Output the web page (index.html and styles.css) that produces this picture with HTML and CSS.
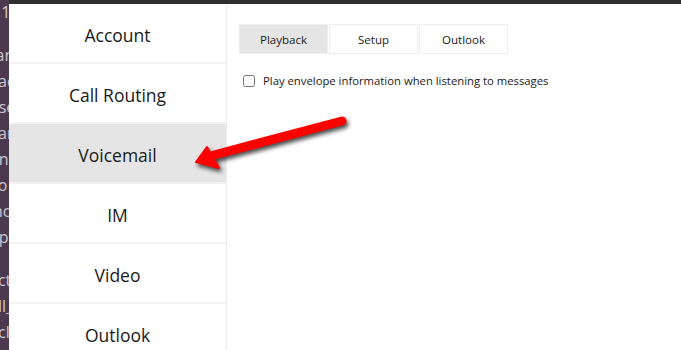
FILE: index.html
```html
<!DOCTYPE html>
<html lang="en">
<head>
  <meta charset="UTF-8">
  <title>Options - Voicemail</title>
  <link rel="stylesheet" href="styles.css">
</head>
<body>
  <!-- bit of the app behind the options window -->
  <div class="behind">
    <div class="behind-line first">ll 1</div>
    <div class="behind-line gap">ran</div>
    <div class="behind-line">eac</div>
    <div class="behind-line">ose</div>
    <div class="behind-line">ear</div>
    <div class="behind-line">on</div>
    <div class="behind-line">go</div>
    <div class="behind-line">inc</div>
    <div class="behind-line">op</div>
    <div class="behind-line gap">act</div>
    <div class="behind-line">all_</div>
    <div class="behind-line">ecl</div>
  </div>

  <div class="window">
    <div class="titlebar"></div>
    <div class="window-body">
      <nav class="sidebar">
        <div class="nav-item">Account</div>
        <div class="nav-item">Call Routing</div>
        <div class="nav-item active">Voicemail</div>
        <div class="nav-item">IM</div>
        <div class="nav-item">Video</div>
        <div class="nav-item">Outlook</div>
      </nav>

      <main class="content">
        <div class="tabs">
          <div class="tab active">Playback</div>
          <div class="tab">Setup</div>
          <div class="tab">Outlook</div>
        </div>
        <label class="option">
          <input type="checkbox">
          <span>Play envelope information when listening to messages</span>
        </label>
      </main>
    </div>
  </div>

  <!-- red arrow pasted over the screenshot -->
  <svg class="arrow" width="681" height="350" viewBox="0 0 681 350">
    <g fill="#f00" stroke="#f00">
      <line x1="342" y1="121" x2="214" y2="155" stroke-width="9" stroke-linecap="round"/>
      <polygon points="196,162 207,147 219,168" stroke-width="2" stroke-linejoin="round"/>
    </g>
  </svg>
</body>
</html>
```

FILE: styles.css
```css
body {
  margin: 0;
  height: 350px;
  display: flex;
  overflow: hidden;
  background: #fff;
  font-family: "Open Sans", "Noto Sans", sans-serif;
  color: #1a1a1a;
}

.behind {
  width: 9px;
  flex-shrink: 0;
  background: #4b3a4e;
  overflow: hidden;
  color: #cfc6d1;
  font-size: 16px;
  white-space: nowrap;
}

.behind-line {
  height: 26px;
  line-height: 26px;
  text-indent: -11px;
}

.behind-line.first {
  margin-top: -1px;
}

.behind-line.gap {
  margin-top: 17px;
}

.window {
  flex: 1;
  display: flex;
  flex-direction: column;
}

.titlebar {
  height: 4px;
  flex-shrink: 0;
  background: #2f2f2f;
}

.window-body {
  flex: 1;
  display: flex;
}

.sidebar {
  width: 217px;
  border-right: 1px solid #ececec;
  flex-shrink: 0;
}

.nav-item {
  height: 60px;
  border-bottom: 2px solid #f3f3f3;
  display: flex;
  align-items: center;
  justify-content: center;
  padding-top: 3px;
  box-sizing: border-box;
  font-size: 17.5px;
}

.nav-item.active {
  background: #e5e5e5;
}

.content {
  flex: 1;
  padding: 20px 0 0 12px;
}

.tabs {
  display: flex;
  gap: 1px;
}

.tab {
  width: 89px;
  height: 30px;
  box-sizing: border-box;
  border: 1px solid #eeeeee;
  display: flex;
  align-items: center;
  justify-content: center;
  font-size: 11.5px;
}

.tab.active {
  background: #e5e5e5;
}

.option {
  display: flex;
  align-items: center;
  margin-top: 19px;
  margin-left: 3px;
  font-size: 11.3px;
}

.option input {
  width: 12px;
  height: 12px;
  margin: 0 8px 0 1px;
}

.arrow {
  position: absolute;
  left: 0;
  top: 0;
  pointer-events: none;
  filter: drop-shadow(2px 3px 2px rgba(0, 0, 0, 0.7));
}
```
